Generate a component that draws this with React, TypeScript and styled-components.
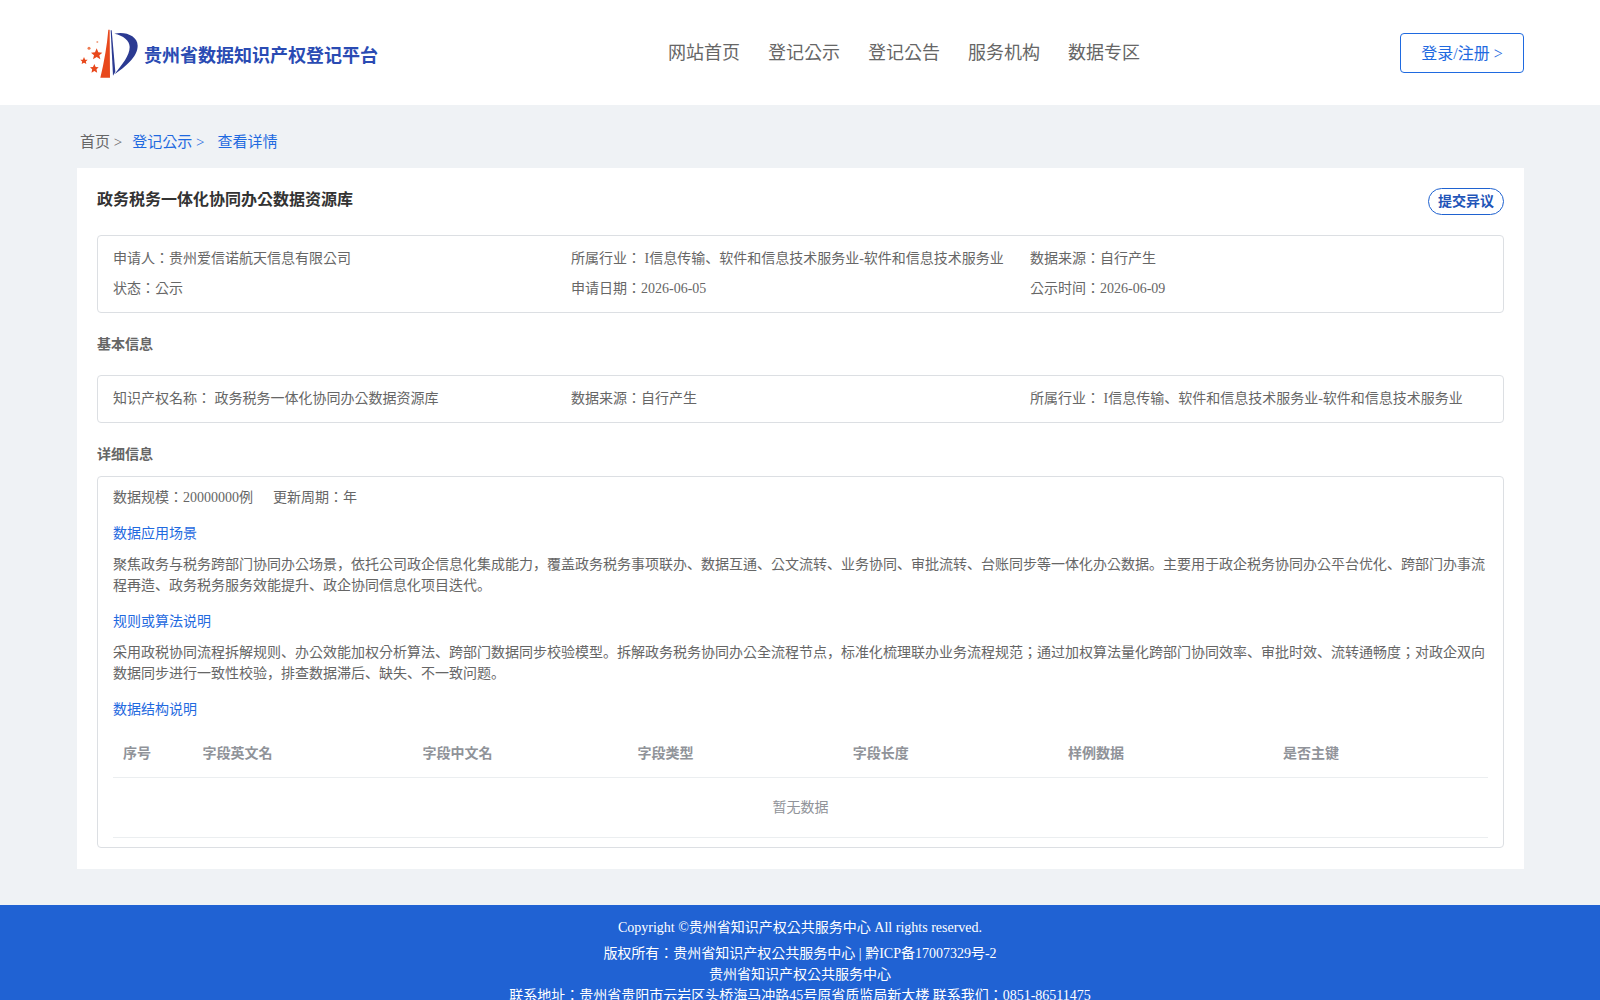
import React from "react";
import styled, { createGlobalStyle } from "styled-components";

const Global = createGlobalStyle`
  html, body { margin: 0; padding: 0; background: #eff2f5; overflow-x: hidden; }
  body { font-family: "Liberation Serif", "Noto Sans CJK KR", serif; font-size: 14px; color: #666; }
  * { box-sizing: border-box; }
`;

const Header = styled.header`
  height: 105px;
  background: #fff;
  padding: 0 76px 0 75px;
  display: grid;
  grid-template-columns: 593px auto 1fr;
  align-items: center;
`;
const Brand = styled.div`
  display: flex;
  align-items: center;
`;
const BrandName = styled.span`
  font: 700 18px "Liberation Sans", "Noto Sans CJK KR", sans-serif;
  color: #2a4bb3;
  padding-top: 3px;
  margin-left: -1px;
`;
const Nav = styled.nav`
  display: flex;
  gap: 28px;
`;
const NavItem = styled.a`
  font: 400 18px/26px "Liberation Sans", "Noto Sans CJK KR", sans-serif;
  color: #666;
`;
const LoginCell = styled.div`
  display: flex;
  justify-content: flex-end;
`;
const LoginButton = styled.button`
  width: 124px;
  height: 40px;
  padding: 0 0 2px;
  border: 1px solid #1f6ae0;
  border-radius: 4px;
  background: #fff;
  color: #1f6ae0;
  font: 400 16px "Liberation Serif", "Noto Sans CJK KR", serif;
`;
const Main = styled.main`
  padding: 0 76px 36px 77px;
`;
const Crumbs = styled.div`
  height: 63px;
  padding: 25px 3px 0;
  display: flex;
  font-size: 15px;
  line-height: 24px;
`;
const Crumb = styled.span<{ $active?: boolean; $gap: number }>`
  color: ${(p) => (p.$active ? "#1f6ae0" : "#666")};
  margin-right: ${(p) => p.$gap}px;
`;
const Card = styled.section`
  background: #fff;
  padding: 20px;
  height: 701px;
`;
const TitleRow = styled.div`
  display: flex;
  justify-content: space-between;
  height: 47px;
`;
const Title = styled.h1`
  margin: 0;
  font: 700 16px/24px "Liberation Sans", "Noto Sans CJK KR", sans-serif;
  color: #333;
`;
const ObjectButton = styled.button`
  width: 76px;
  height: 27px;
  padding: 0 0 3px;
  border: 1px solid #1f62d0;
  border-radius: 14px;
  background: #fff;
  color: #1f55b8;
  font: 700 14px "Liberation Sans", "Noto Sans CJK KR", sans-serif;
`;
const Box = styled.div`
  border: 1px solid #dcdfe3;
  border-radius: 4px;
  padding: 0 15px;
`;
const InfoGrid = styled(Box)<{ $h: number }>`
  height: ${(p) => p.$h}px;
  padding-bottom: 2px;
  display: grid;
  grid-template-columns: 458px 459px 1fr;
  align-content: center;
  row-gap: 9px;
  line-height: 21px;
`;
const InfoText = styled.div`
  white-space: nowrap;
`;
const SectionHead = styled.h2<{ $h: number; $pt: number }>`
  margin: 0;
  height: ${(p) => p.$h}px;
  padding-top: ${(p) => p.$pt}px;
  font: 700 14px/20px "Liberation Sans", "Noto Sans CJK KR", sans-serif;
  color: #666;
  display: flex;
  align-items: center;
`;
const DetailBox = styled(Box)`
  height: 372px;
  padding-top: 10px;
`;
const MetaRow = styled.div`
  display: flex;
  gap: 20px;
  line-height: 21px;
`;
const SubHead = styled.div<{ $mt: number }>`
  margin-top: ${(p) => p.$mt}px;
  color: #1f6ae0;
  line-height: 21px;
`;
const Para = styled.p`
  margin: 10px 0 0;
  line-height: 21px;
`;
const Table = styled.div`
  margin-top: 10px;
`;
const Row = styled.div`
  display: grid;
  grid-template-columns: 79.5px 220px 215px 215.25px 215.25px 215px 1fr;
  height: 48px;
  padding-bottom: 3px;
  align-items: center;
  border-bottom: 1px solid #ebeef0;
`;
const Th = styled.div`
  padding-left: 10px;
  font: 700 14px "Liberation Sans", "Noto Sans CJK KR", sans-serif;
  color: #909399;
`;
const Empty = styled.div`
  height: 60px;
  line-height: 60px;
  text-align: center;
  color: #909399;
  border-bottom: 1px solid #ebeef0;
`;
const Footer = styled.footer`
  background: #2062d3;
  color: #fff;
  text-align: center;
  padding: 12px 0 12px;
  line-height: 21px;
`;
const CopyLine = styled.div`
  margin-bottom: 5px;
`;

function Logo() {
  return (
    <svg width="70" height="60" viewBox="0 0 210 180" aria-hidden="true">
      <path d="M100 20 L104 20 L105 164 L76 164 Q94 90 100 20Z" fill="#e8481c" />
      <path d="M107 22 L110 22 L121 146 L114 158Z" fill="#2b3a92" />
      <path d="M118 32 C150 24 188 38 188 68 C188 102 150 132 118 154 C142 124 164 98 164 72 C164 52 145 38 118 32Z" fill="#2b3a92" />
      <polygon points="65,76 70,88 82,89 73,97 76,109 65,102 54,109 57,97 48,89 60,88" fill="#e8481c" />
      <polygon points="27,102 30.5,110 38,110.5 32.5,115.5 34,123 27,119 20,123 21.5,115.5 16,110.5 23.5,110" fill="#e8481c" />
      <polygon points="58,123 62,132 71,133 64.5,139 66.5,149 58,144 49.5,149 51.5,139 45,133 54,132" fill="#e8481c" />
      <circle cx="42" cy="76" r="4.5" fill="#ee7a50" />
      <circle cx="67" cy="57" r="3" fill="#f0a080" />
    </svg>
  );
}

const navItems = ["网站首页", "登记公示", "登记公告", "服务机构", "数据专区"];
const columns = ["序号", "字段英文名", "字段中文名", "字段类型", "字段长度", "样例数据", "是否主键"];

export default function App() {
  return (
    <>
      <Global />
      <Header>
        <Brand>
          <Logo />
          <BrandName>贵州省数据知识产权登记平台</BrandName>
        </Brand>
        <Nav>
          {navItems.map((n) => (
            <NavItem key={n}>{n}</NavItem>
          ))}
        </Nav>
        <LoginCell>
          <LoginButton>登录/注册 &gt;</LoginButton>
        </LoginCell>
      </Header>
      <Main>
        <Crumbs>
          <Crumb $gap={10}>首页 &gt;</Crumb>
          <Crumb $active $gap={13}>登记公示 &gt;</Crumb>
          <Crumb $active $gap={0}>查看详情</Crumb>
        </Crumbs>
        <Card>
          <TitleRow>
            <Title>政务税务一体化协同办公数据资源库</Title>
            <ObjectButton>提交异议</ObjectButton>
          </TitleRow>
          <InfoGrid $h={78}>
            <InfoText>申请人：贵州爱信诺航天信息有限公司</InfoText>
            <InfoText>所属行业： I信息传输、软件和信息技术服务业-软件和信息技术服务业</InfoText>
            <InfoText>数据来源：自行产生</InfoText>
            <InfoText>状态：公示</InfoText>
            <InfoText>申请日期：2026-06-05</InfoText>
            <InfoText>公示时间：2026-06-09</InfoText>
          </InfoGrid>
          <SectionHead $h={62} $pt={0}>基本信息</SectionHead>
          <InfoGrid $h={48}>
            <InfoText>知识产权名称： 政务税务一体化协同办公数据资源库</InfoText>
            <InfoText>数据来源：自行产生</InfoText>
            <InfoText>所属行业： I信息传输、软件和信息技术服务业-软件和信息技术服务业</InfoText>
          </InfoGrid>
          <SectionHead $h={53} $pt={8}>详细信息</SectionHead>
          <DetailBox>
            <MetaRow>
              <span>数据规模：20000000例</span>
              <span>更新周期：年</span>
            </MetaRow>
            <SubHead $mt={15}>数据应用场景</SubHead>
            <Para>
              聚焦政务与税务跨部门协同办公场景，依托公司政企信息化集成能力，覆盖政务税务事项联办、数据互通、公文流转、业务协同、审批流转、台账同步等一体化办公数据。主要用于政企税务协同办公平台优化、跨部门办事流程再造、政务税务服务效能提升、政企协同信息化项目迭代。
            </Para>
            <SubHead $mt={15}>规则或算法说明</SubHead>
            <Para>
              采用政税协同流程拆解规则、办公效能加权分析算法、跨部门数据同步校验模型。拆解政务税务协同办公全流程节点，标准化梳理联办业务流程规范；通过加权算法量化跨部门协同效率、审批时效、流转通畅度；对政企双向数据同步进行一致性校验，排查数据滞后、缺失、不一致问题。
            </Para>
            <SubHead $mt={15}>数据结构说明</SubHead>
            <Table>
              <Row>
                {columns.map((c) => (
                  <Th key={c}>{c}</Th>
                ))}
              </Row>
              <Empty>暂无数据</Empty>
            </Table>
          </DetailBox>
        </Card>
      </Main>
      <Footer>
        <CopyLine>Copyright ©贵州省知识产权公共服务中心 All rights reserved.</CopyLine>
        <div>版权所有：贵州省知识产权公共服务中心 | 黔ICP备17007329号-2</div>
        <div>贵州省知识产权公共服务中心</div>
        <div>联系地址：贵州省贵阳市云岩区头桥海马冲路45号原省质监局新大楼 联系我们：0851-86511475</div>
      </Footer>
    </>
  );
}
